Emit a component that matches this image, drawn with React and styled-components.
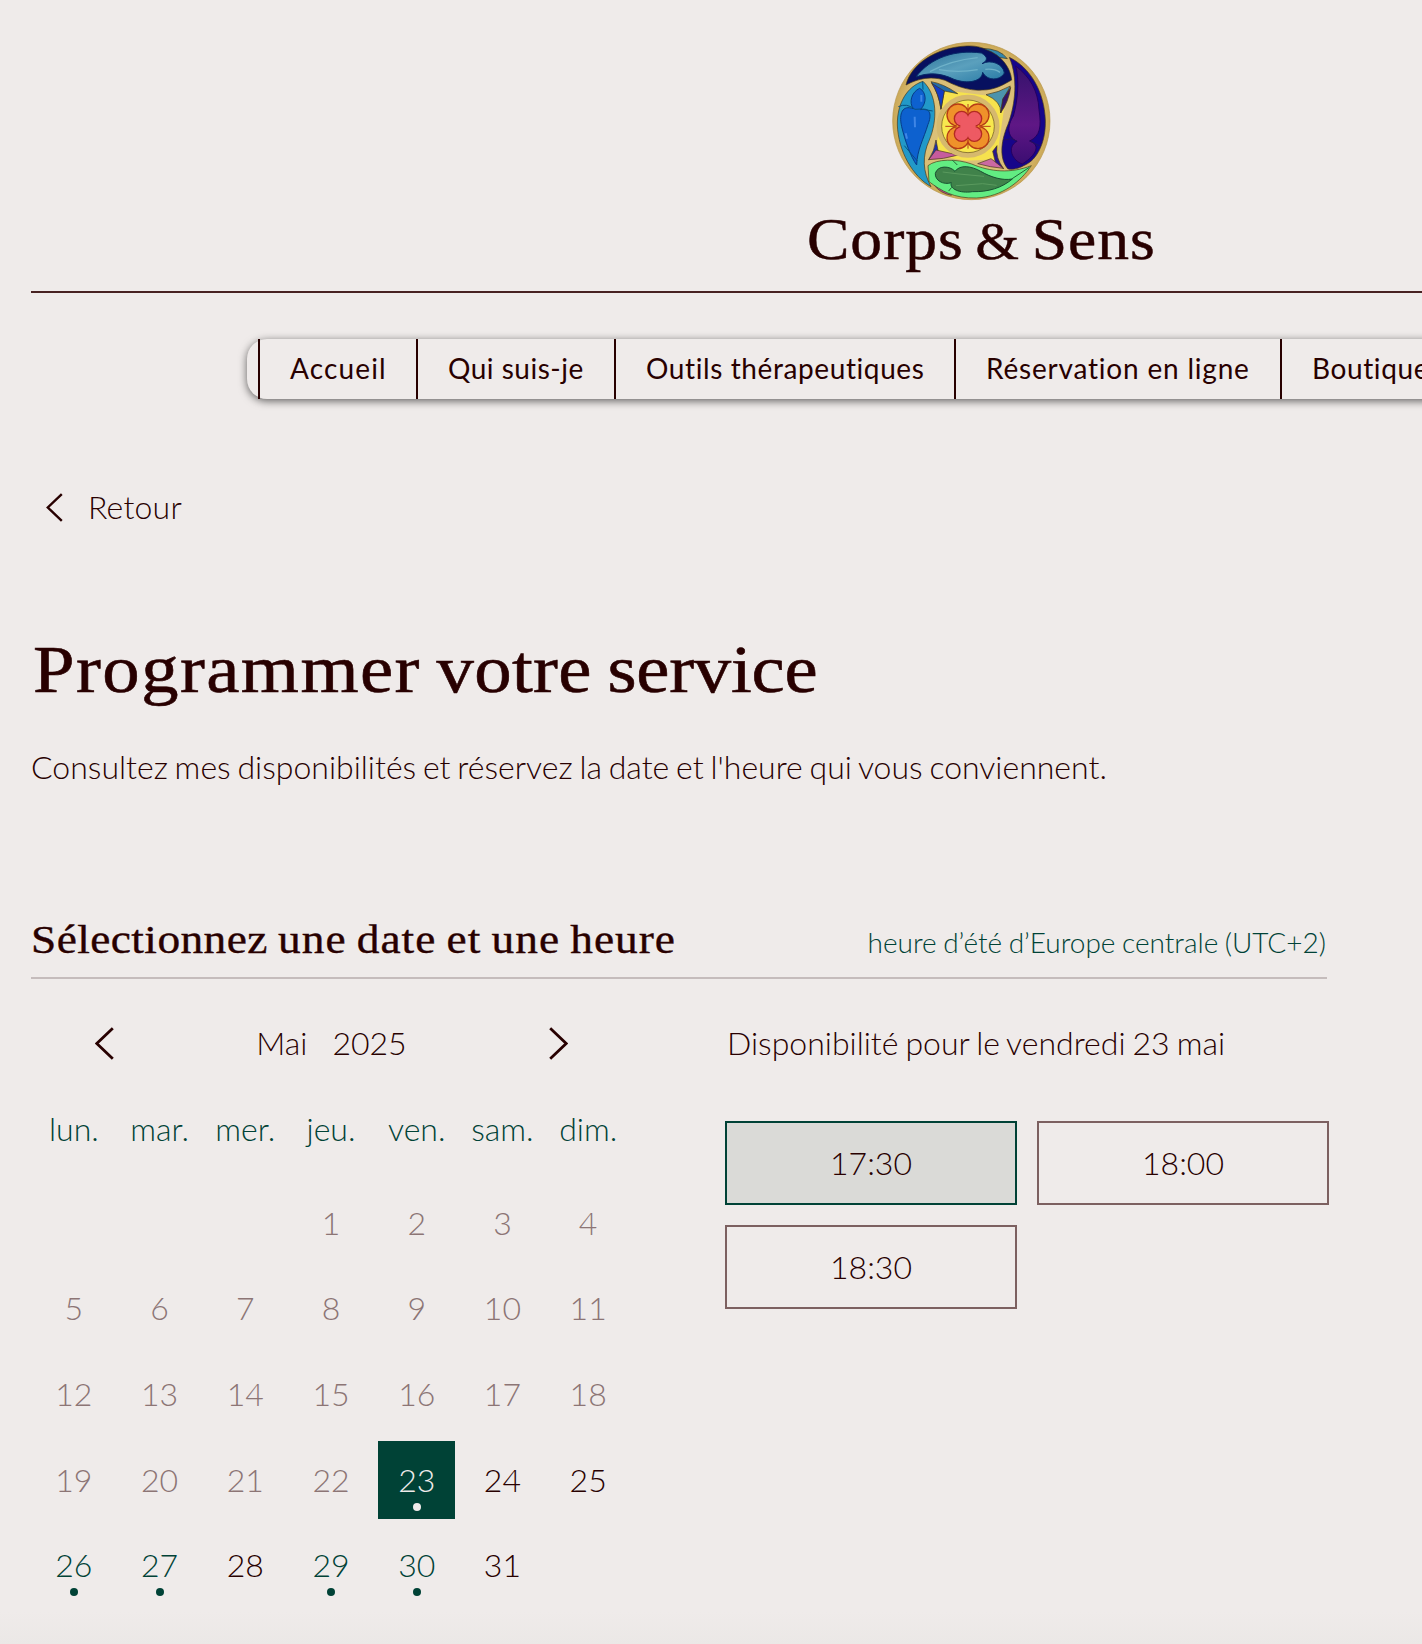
import React from "react";
import styled, { createGlobalStyle } from "styled-components";

const INK = "#280000";
const GREEN = "#004236";
const PAPER = "#efebea";

const GlobalStyle = createGlobalStyle`
  *, *::before, *::after { box-sizing: border-box; }
  html, body { margin: 0; padding: 0; background: ${PAPER}; overflow: hidden; }
  h1, h2, p { margin: 0; font-weight: inherit; }
  button { font: inherit; color: inherit; background: none; border: 0; padding: 0; }
`;

const Page = styled.div`
  width: 100%;
  height: 1644px;
  overflow: hidden;
  background: linear-gradient(to bottom, ${PAPER} 1612px, #ebe8e6 1644px);
  color: ${INK};
  font-family: Lato, "Liberation Sans", sans-serif;
  font-weight: 300;
  font-size: 32px;
  line-height: 40px;
`;

const Serif = styled.span`
  display: inline-block;
  font-family: "Liberation Serif", "Times New Roman", serif;
  font-weight: 400;
  white-space: nowrap;
  transform-origin: left center;
  transform: scaleX(${(p) => p.$stretch});
  font-size: ${(p) => p.$size}px;
  line-height: ${(p) => p.$line}px;
  letter-spacing: ${(p) => p.$spacing}px;
  word-spacing: ${(p) => p.$wordGap}px;
  -webkit-text-stroke: ${(p) => p.$stroke}px ${INK};
`;

const Word = styled.span`
  letter-spacing: ${(p) => p.$spacing}px;
`;

const Ampersand = styled.span`
  font-size: 0.88em;
`;

const Header = styled.header`
  width: 1943px;
  padding: 41px 31px 0;
  display: flex;
  flex-direction: column;
  align-items: center;
`;

const Brand = styled.div`
  width: 346px;
  height: 70px;
  margin: 3px 0 17px 17px;
`;

const Divider = styled.hr`
  align-self: stretch;
  height: 2px;
  margin: 0;
  border: 0;
  background: #482222;
`;

const Nav = styled.nav`
  display: flex;
  width: 1480px;
  height: 60px;
  margin: 46px 0 0 247px;
  padding-left: 11px;
  border-radius: 20px;
  box-shadow: 0 2px 8px rgba(0, 0, 0, 0.6);
`;

const NavItem = styled.a`
  flex: none;
  width: ${(p) => p.$width}px;
  padding-left: 30px;
  border-left: 2px solid ${INK};
  font-weight: 400;
  font-size: 28px;
  line-height: 58px;
  letter-spacing: ${(p) => p.$spacing}px;
  white-space: nowrap;
`;

const Main = styled.main`
  width: 1327px;
  padding-left: 31px;
`;

const Back = styled.button`
  display: flex;
  align-items: center;
  gap: 25px;
  height: 40px;
  margin-top: 88px;
  padding-left: 15px;
  letter-spacing: 0.2px;
`;

const Title = styled.h1`
  height: 80px;
  margin-top: 102px;
  padding-left: 2px;
`;

const Intro = styled.p`
  margin-top: 38px;
  white-space: nowrap;
  word-spacing: -1.9px;
`;

const SectionHead = styled.div`
  display: flex;
  justify-content: space-between;
  align-items: flex-start;
  height: 64px;
  margin-top: 128px;
  border-bottom: 2px solid #c5bcbc;
`;

const Zone = styled.p`
  font-size: 28px;
  line-height: 40px;
  padding: 7px 1px 0 0;
  word-spacing: -1.1px;
  color: ${GREEN};
`;

const Booking = styled.div`
  display: grid;
  grid-template-columns: 600px 604px;
  column-gap: 94px;
`;

const MonthBar = styled.div`
  display: flex;
  justify-content: space-between;
  align-items: center;
  height: 40px;
  margin-top: 44px;
  padding: 0 63px 0 64px;
`;

const Month = styled.div`
  display: flex;
  gap: 25px;
`;

const Weekdays = styled.div`
  display: grid;
  grid-template-columns: repeat(7, 1fr);
  margin-top: 46px;
  text-align: center;
  color: ${GREEN};
`;

const Days = styled.div`
  display: grid;
  grid-template-columns: repeat(7, 1fr);
  grid-auto-rows: 85.6px;
  margin-top: 31px;
  justify-items: center;
  align-items: center;
`;

const dayColors = { past: "#8c7575", free: GREEN, none: INK, selected: PAPER };

const Day = styled.button`
  position: relative;
  width: 77px;
  height: 78px;
  line-height: 78px;
  color: ${(p) => dayColors[p.$state]};
  background: ${(p) => (p.$state === "selected" ? GREEN : "transparent")};
  ${(p) => p.$first && `grid-column-start: ${p.$first};`}
`;

const Dot = styled.i`
  position: absolute;
  left: 50%;
  bottom: 8px;
  width: 8px;
  height: 8px;
  margin-left: -4px;
  border-radius: 50%;
  background: currentColor;
`;

const Availability = styled.p`
  margin: 44px 0 58px 2px;
  white-space: nowrap;
  word-spacing: -1.7px;
`;

const Slots = styled.div`
  display: grid;
  grid-template-columns: 292px 292px;
  gap: 20px;
`;

const Slot = styled.button`
  height: 84px;
  border: 2px solid ${(p) => (p.$selected ? GREEN : "#7c6060")};
  background: ${(p) => (p.$selected ? "#dadad7" : "transparent")};
`;

function Chevron({ width, height, flip, stroke = 2.4 }) {
  return (
    <svg width={width} height={height} viewBox={`0 0 ${width} ${height}`} fill="none">
      <path
        d={
          flip
            ? `M1.2 1.2L${width - 1.8} ${height / 2}L1.2 ${height - 1.2}`
            : `M${width - 1.2} 1.2L1.8 ${height / 2}L${width - 1.2} ${height - 1.2}`
        }
        stroke={INK}
        strokeWidth={stroke}
      />
    </svg>
  );
}

function Quatrefoil({ dx, dy, r, fill, stroke }) {
  const lobes = [
    [-dx, -dy],
    [dx, -dy],
    [-dx, dy],
    [dx, dy],
  ];
  return (
    <g transform="translate(264 289)">
      {lobes.map(([x, y]) => (
        <circle key={`${x},${y}`} cx={x} cy={y} r={r} fill={stroke} />
      ))}
      {lobes.map(([x, y]) => (
        <circle key={`${x},${y}`} cx={x} cy={y} r={r - 4} fill={fill} />
      ))}
      <rect x={-dx - 4} y={-dy - 4} width={2 * dx + 8} height={2 * dy + 8} fill={fill} />
    </g>
  );
}

function Rosette() {
  return (
    <svg width="160" height="160" viewBox="36 33 480 480">
      <defs>
        <radialGradient id="gold" cx=".5" cy=".5" r=".5">
          <stop offset="0" stopColor="#dfc57e" />
          <stop offset=".85" stopColor="#d9bd74" />
          <stop offset="1" stopColor="#cba856" />
        </radialGradient>
        <linearGradient id="sky" x1="0" y1="0" x2="1" y2="1">
          <stop offset="0" stopColor="#2b7299" />
          <stop offset=".5" stopColor="#5ba0bd" />
          <stop offset="1" stopColor="#2679a5" />
        </linearGradient>
        <linearGradient id="plum" x1="0" y1="0" x2="0" y2="1">
          <stop offset="0" stopColor="#35126c" />
          <stop offset=".6" stopColor="#5f1785" />
          <stop offset="1" stopColor="#3b0d72" />
        </linearGradient>
      </defs>
      <circle cx="274" cy="273" r="236" fill="url(#gold)" stroke="#b8974b" strokeWidth="2" />

      <g stroke="#463717" strokeWidth="2" strokeLinejoin="round">
        <path d="M192 181L362 202L378 196L350 388L258 392L166 376L178 290Z" fill="#f6e24e" stroke="none" />
        <path d="M153 155Q188 160 233 191L193 183L183 238Q176 190 153 155Z" fill="#256ca5" />
        <path d="M155 160L193 183L183 238Q176 190 155 160Z" fill="#143cc5" />
        <path d="M318 194Q355 188 391 168L370 207L362 249Q365 215 318 194Z" fill="#4c93ac" />
        <path d="M392 172Q386 215 362 249L368 207Z" fill="#331466" />
        <path d="M168 330Q164 362 146 389L175 366Z" fill="#1c2fae" />
        <path d="M146 389L168 360L235 375Q190 388 146 389Z" fill="#c65b9d" />
        <path d="M351 347Q346 385 371 416L347 400L338 364Z" fill="#29178c" />
        <path d="M293 401L333 386L370 415Q330 412 293 401Z" fill="#cb69a2" />
        <path d="M163 466L210 480L214 496Q180 489 163 466Z" fill="#b9478f" />
        <path d="M306 55Q360 56 382 86L330 78Z" fill="#3186ae" />

        <path
          d="M78 165C92 104 168 52 260 48C282 47 303 50 321 60C362 74 392 112 395 150C370 164 343 181 306 180C264 184 220 164 195 151C155 137 115 145 78 165Z"
          fill="#07105f"
        />
        <path
          d="M388 82C450 112 493 184 496 270C498 330 475 390 431 407C415 416 393 421 383 416C354 381 366 325 384 283C407 220 414 143 388 82Z"
          fill="#16058a"
        />
        <path
          d="M129 154C82 169 51 219 52 285C55 364 98 439 153 470C128 425 126 378 148 330C173 270 172 194 129 154Z"
          fill="#2299c8"
        />
        <path
          d="M144 407C170 386 230 386 275 402C332 426 392 431 454 407C422 454 368 500 289 504C221 506 184 482 147 455Z"
          fill="#62ed82"
        />
      </g>

      <g strokeWidth="3" strokeLinejoin="round">
        <path
          d="M108 141C151 83 226 58 304 69C326 81 322 93 306 101C333 87 370 102 373 129C360 153 321 153 308 127C306 155 263 163 222 148C181 128 144 127 108 141Z"
          fill="url(#sky)" stroke="#062b68"
        />
        <path d="M150 125Q212 91 293 83M177 119Q235 129 293 119M316 118Q343 115 360 127" fill="none" stroke="#6fb2c9" strokeWidth="4" />
        <path
          d="M407 108C449 140 474 180 477 239C485 292 480 318 449 333C482 344 471 374 427 402C397 392 379 351 411 334C379 319 382 287 400 258C413 213 419 153 407 108Z"
          fill="url(#plum)" stroke="#240060"
        />
        <path d="M373 330L394 326L412 334M449 333L479 348" fill="none" stroke="#25105f" />
        <path
          d="M119 175C94 186 86 218 100 236C67 224 56 250 65 290C76 335 92 380 110 405C111 360 132 324 144 283C155 257 153 231 121 239C142 218 139 186 119 175Z"
          fill="#0d61cf" stroke="#073b86"
        />
        <path d="M128 155L129 179M55 230Q80 218 105 238L124 237L158 243M73 347L112 393" fill="none" stroke="#075181" />
        <path d="M104 260L105 292M77 310L81 326M124 195L124 215" stroke="#3f86e6" strokeWidth="6" />
        <path
          d="M166 430C173 405 210 407 225 424C240 403 274 408 302 424C335 443 368 452 397 447C365 474 325 486 277 485C239 491 207 476 214 458C190 466 164 451 166 430Z"
          fill="#40824a" stroke="#184f31"
        />
        <path d="M188 426L237 432L312 439M228 467L308 461L350 466" fill="none" stroke="#5a9a5e" />
        <path d="M217 390L232 405M206 483L215 472M395 447L448 412" fill="none" stroke="#226536" />
      </g>

      <circle cx="264" cy="289" r="78" fill="#f8e84e" />
      <circle cx="264" cy="289" r="87" fill="none" stroke="#d6b96d" strokeWidth="15" />
      <circle cx="264" cy="289" r="79" fill="none" stroke="#614c20" strokeWidth="2" />
      <Quatrefoil dx={30} dy={34} r={35} fill="#ef922a" stroke="#b73b16" />
      <path d="M264 222V250M196 289H226M302 289H332M264 330V356" stroke="#b73b16" strokeWidth="3" />
      <Quatrefoil dx={19} dy={23} r={24} fill="#ee5a63" stroke="#b32a22" />
    </svg>
  );
}

const navItems = [
  ["Accueil", 158, 1.15],
  ["Qui suis-je", 198, 0.5],
  ["Outils thérapeutiques", 340, 0.6],
  ["Réservation en ligne", 326, 0.8],
  ["Boutique", 190, 0.6],
];

const weekdays = ["lun.", "mar.", "mer.", "jeu.", "ven.", "sam.", "dim."];
const freeDays = [26, 27, 29, 30];
const slots = ["17:30", "18:00", "18:30"];

function dayState(day) {
  if (day < 23) return "past";
  if (day === 23) return "selected";
  return freeDays.includes(day) ? "free" : "none";
}

export default function App() {
  return (
    <Page>
      <GlobalStyle />
      <Header>
        <Rosette />
        <Brand>
          <Serif $size={60} $line={70} $stretch={1.06} $spacing={0.9} $wordGap={-4.8} $stroke={0.5}>
            Corps <Ampersand>&amp;</Ampersand> Sens
          </Serif>
        </Brand>
        <Divider />
      </Header>
      <Nav>
        {navItems.map(([label, width, spacing]) => (
          <NavItem key={label} $width={width} $spacing={spacing}>
            {label}
          </NavItem>
        ))}
      </Nav>
      <Main>
        <Back>
          <Chevron width={17} height={29} />
          Retour
        </Back>
        <Title>
          <Serif $size={67} $line={80} $stretch={1.115} $spacing={1.3} $wordGap={-4} $stroke={0.6}>
            Programmer <Word $spacing={0.3}>votre</Word> <Word $spacing={-0.2}>service</Word>
          </Serif>
        </Title>
        <Intro>Consultez mes disponibilités et réservez la date et l'heure qui vous conviennent.</Intro>
        <SectionHead>
          <h2>
            <Serif $size={41} $line={48} $stretch={1.105} $spacing={0.9} $wordGap={-1.8} $stroke={0.4}>
              <Word $spacing={0.4}>Sélectionnez</Word> une date et une heure
            </Serif>
          </h2>
          <Zone>heure d’été d’Europe centrale (UTC+2)</Zone>
        </SectionHead>
        <Booking>
          <section>
            <MonthBar>
              <Chevron width={19} height={33} stroke={2.8} />
              <Month>
                <span>Mai</span>
                <span>2025</span>
              </Month>
              <Chevron width={19} height={33} stroke={2.8} flip />
            </MonthBar>
            <Weekdays>
              {weekdays.map((name) => (
                <span key={name}>{name}</span>
              ))}
            </Weekdays>
            <Days>
              {Array.from({ length: 31 }, (_, i) => i + 1).map((day) => {
                const state = dayState(day);
                return (
                  <Day key={day} $state={state} $first={day === 1 ? 4 : 0}>
                    {day}
                    {(state === "free" || state === "selected") && <Dot />}
                  </Day>
                );
              })}
            </Days>
          </section>
          <section>
            <Availability>Disponibilité pour le vendredi 23 mai</Availability>
            <Slots>
              {slots.map((time, i) => (
                <Slot key={time} $selected={i === 0}>
                  {time}
                </Slot>
              ))}
            </Slots>
          </section>
        </Booking>
      </Main>
    </Page>
  );
}
